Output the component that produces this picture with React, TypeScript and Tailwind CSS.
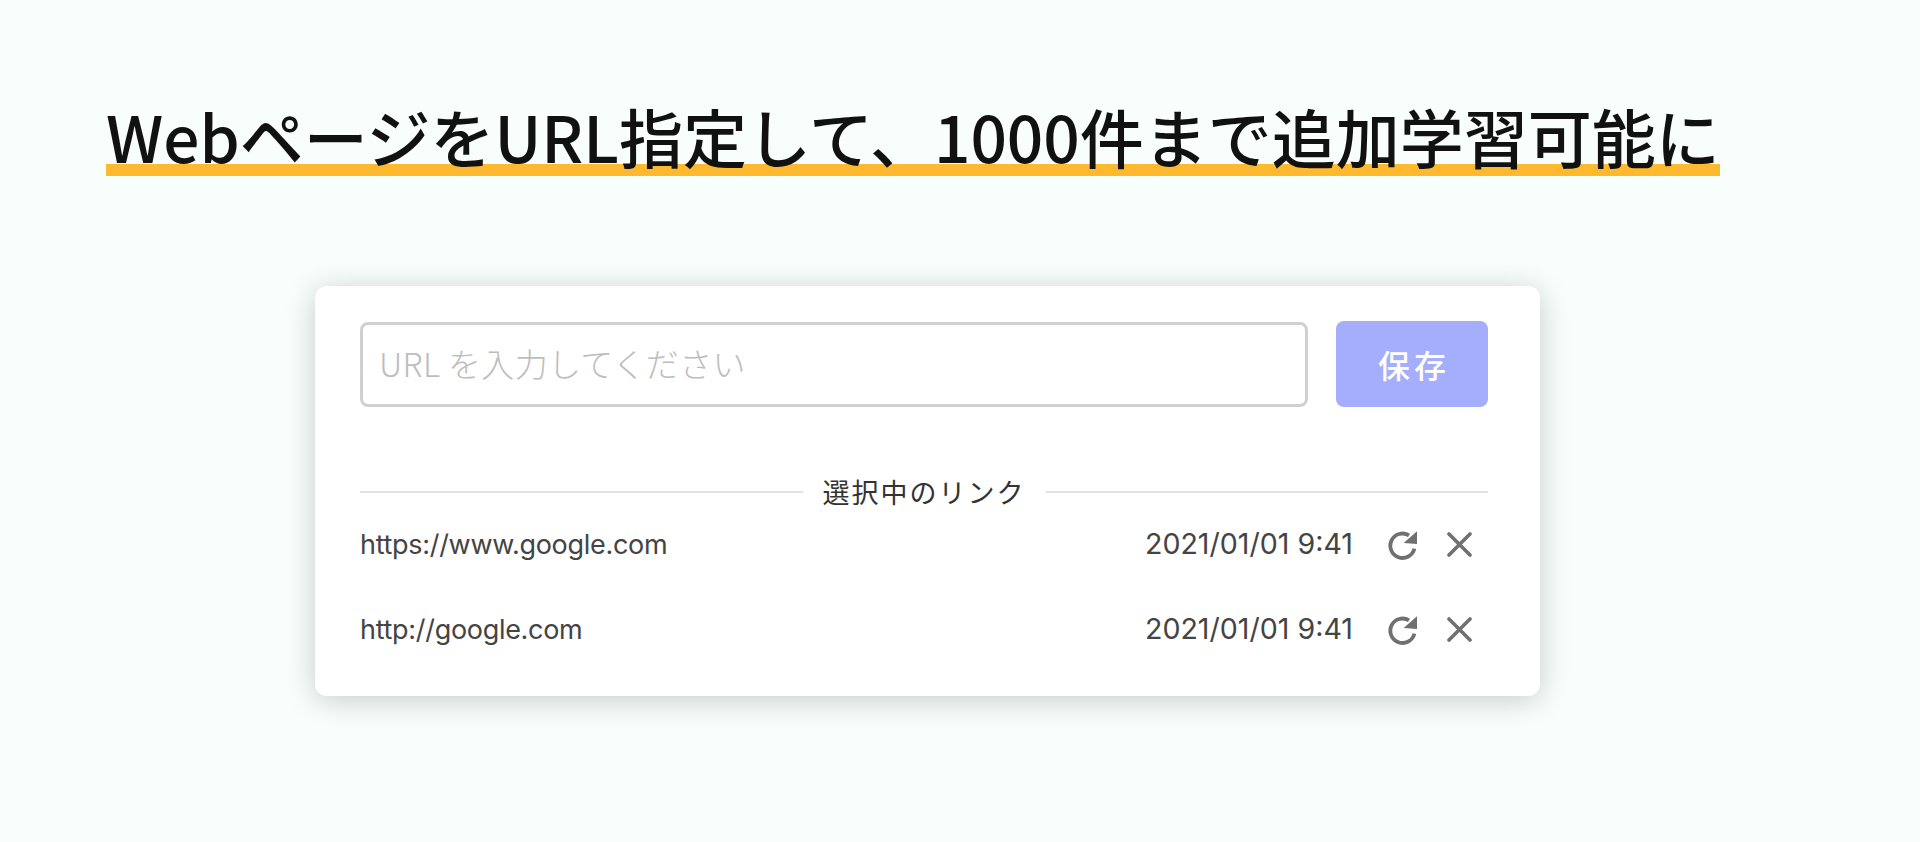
import React from "react";

const links = [
  { url: "https://www.google.com", date: "2021/01/01 9:41" },
  { url: "http://google.com", date: "2021/01/01 9:41" },
];

function ReloadIcon() {
  return (
    <svg viewBox="0 0 30 30" className="w-[30px] h-[30px]">
      <path
        d="M22 5.4 A12.2 12.2 0 1 0 27.4 18.6"
        fill="none"
        stroke="#707070"
        strokeWidth="3.8"
      />
      <path d="M30.3 1 L30.3 14 L16.6 13 Z" fill="#707070" />
    </svg>
  );
}

function CloseIcon() {
  return (
    <svg viewBox="0 0 25 25" className="w-[25px] h-[25px]">
      <path
        d="M2 2 L23 23 M23 2 L2 23"
        fill="none"
        stroke="#707070"
        strokeWidth="3.6"
        strokeLinecap="round"
      />
    </svg>
  );
}

export default function App() {
  return (
    <div className="min-h-[842px] bg-[#f8fefc] pt-[100px] pl-[106px] font-['Noto_Sans_CJK_JP',sans-serif] overflow-hidden">
      <h1 className="inline-block h-[76px] leading-[70px] text-[64px] font-medium text-[#111111] whitespace-nowrap bg-[linear-gradient(transparent_64px,#ffb92f_64px)]">
        WebページをURL指定して、1000件まで追加学習可能に
      </h1>

      {/* Card */}
      <div className="mt-[110px] ml-[209px] w-[1225px] h-[410px] bg-white rounded-[12px] pt-[36px] pl-[45px] pr-[52px] shadow-[0_4px_30px_rgba(0,0,0,0.2)]">
        <div className="flex gap-[28px]">
          <input
            placeholder="URL を入力してください"
            className="w-[948px] h-[85px] border-[3px] border-[#d0d0d0] rounded-[8px] px-[16px] pb-[4px] text-[33px] tracking-[0.3px] font-light placeholder:text-[#bdbdbd] outline-none"
          />
          <button className="w-[152px] h-[86px] -mt-px bg-[#a5aefc] rounded-[8px] pl-[4px] text-white text-[32px] font-medium tracking-[4px]">
            保存
          </button>
        </div>

        <div className="flex items-center gap-[20px] mt-[75px] h-[20px]">
          <div className="flex-1 h-[2px] bg-[#e2e2e2]" />
          <span className="text-[27px] text-[#333333] tracking-[2px]">選択中のリンク</span>
          <div className="flex-1 h-[2px] bg-[#e2e2e2]" />
        </div>

        {links.map((link) => (
          <div key={link.url} className="flex items-center h-[85px] font-['Inter',sans-serif] text-[#444444]">
            <span className="flex-1 pt-[2px] text-[27px] tracking-[-0.3px]">{link.url}</span>
            <span className="text-[28.6px]">{link.date}</span>
            <span className="ml-[34px]">
              <ReloadIcon />
            </span>
            <span className="ml-[30px] mr-[16px]">
              <CloseIcon />
            </span>
          </div>
        ))}
      </div>
    </div>
  );
}
